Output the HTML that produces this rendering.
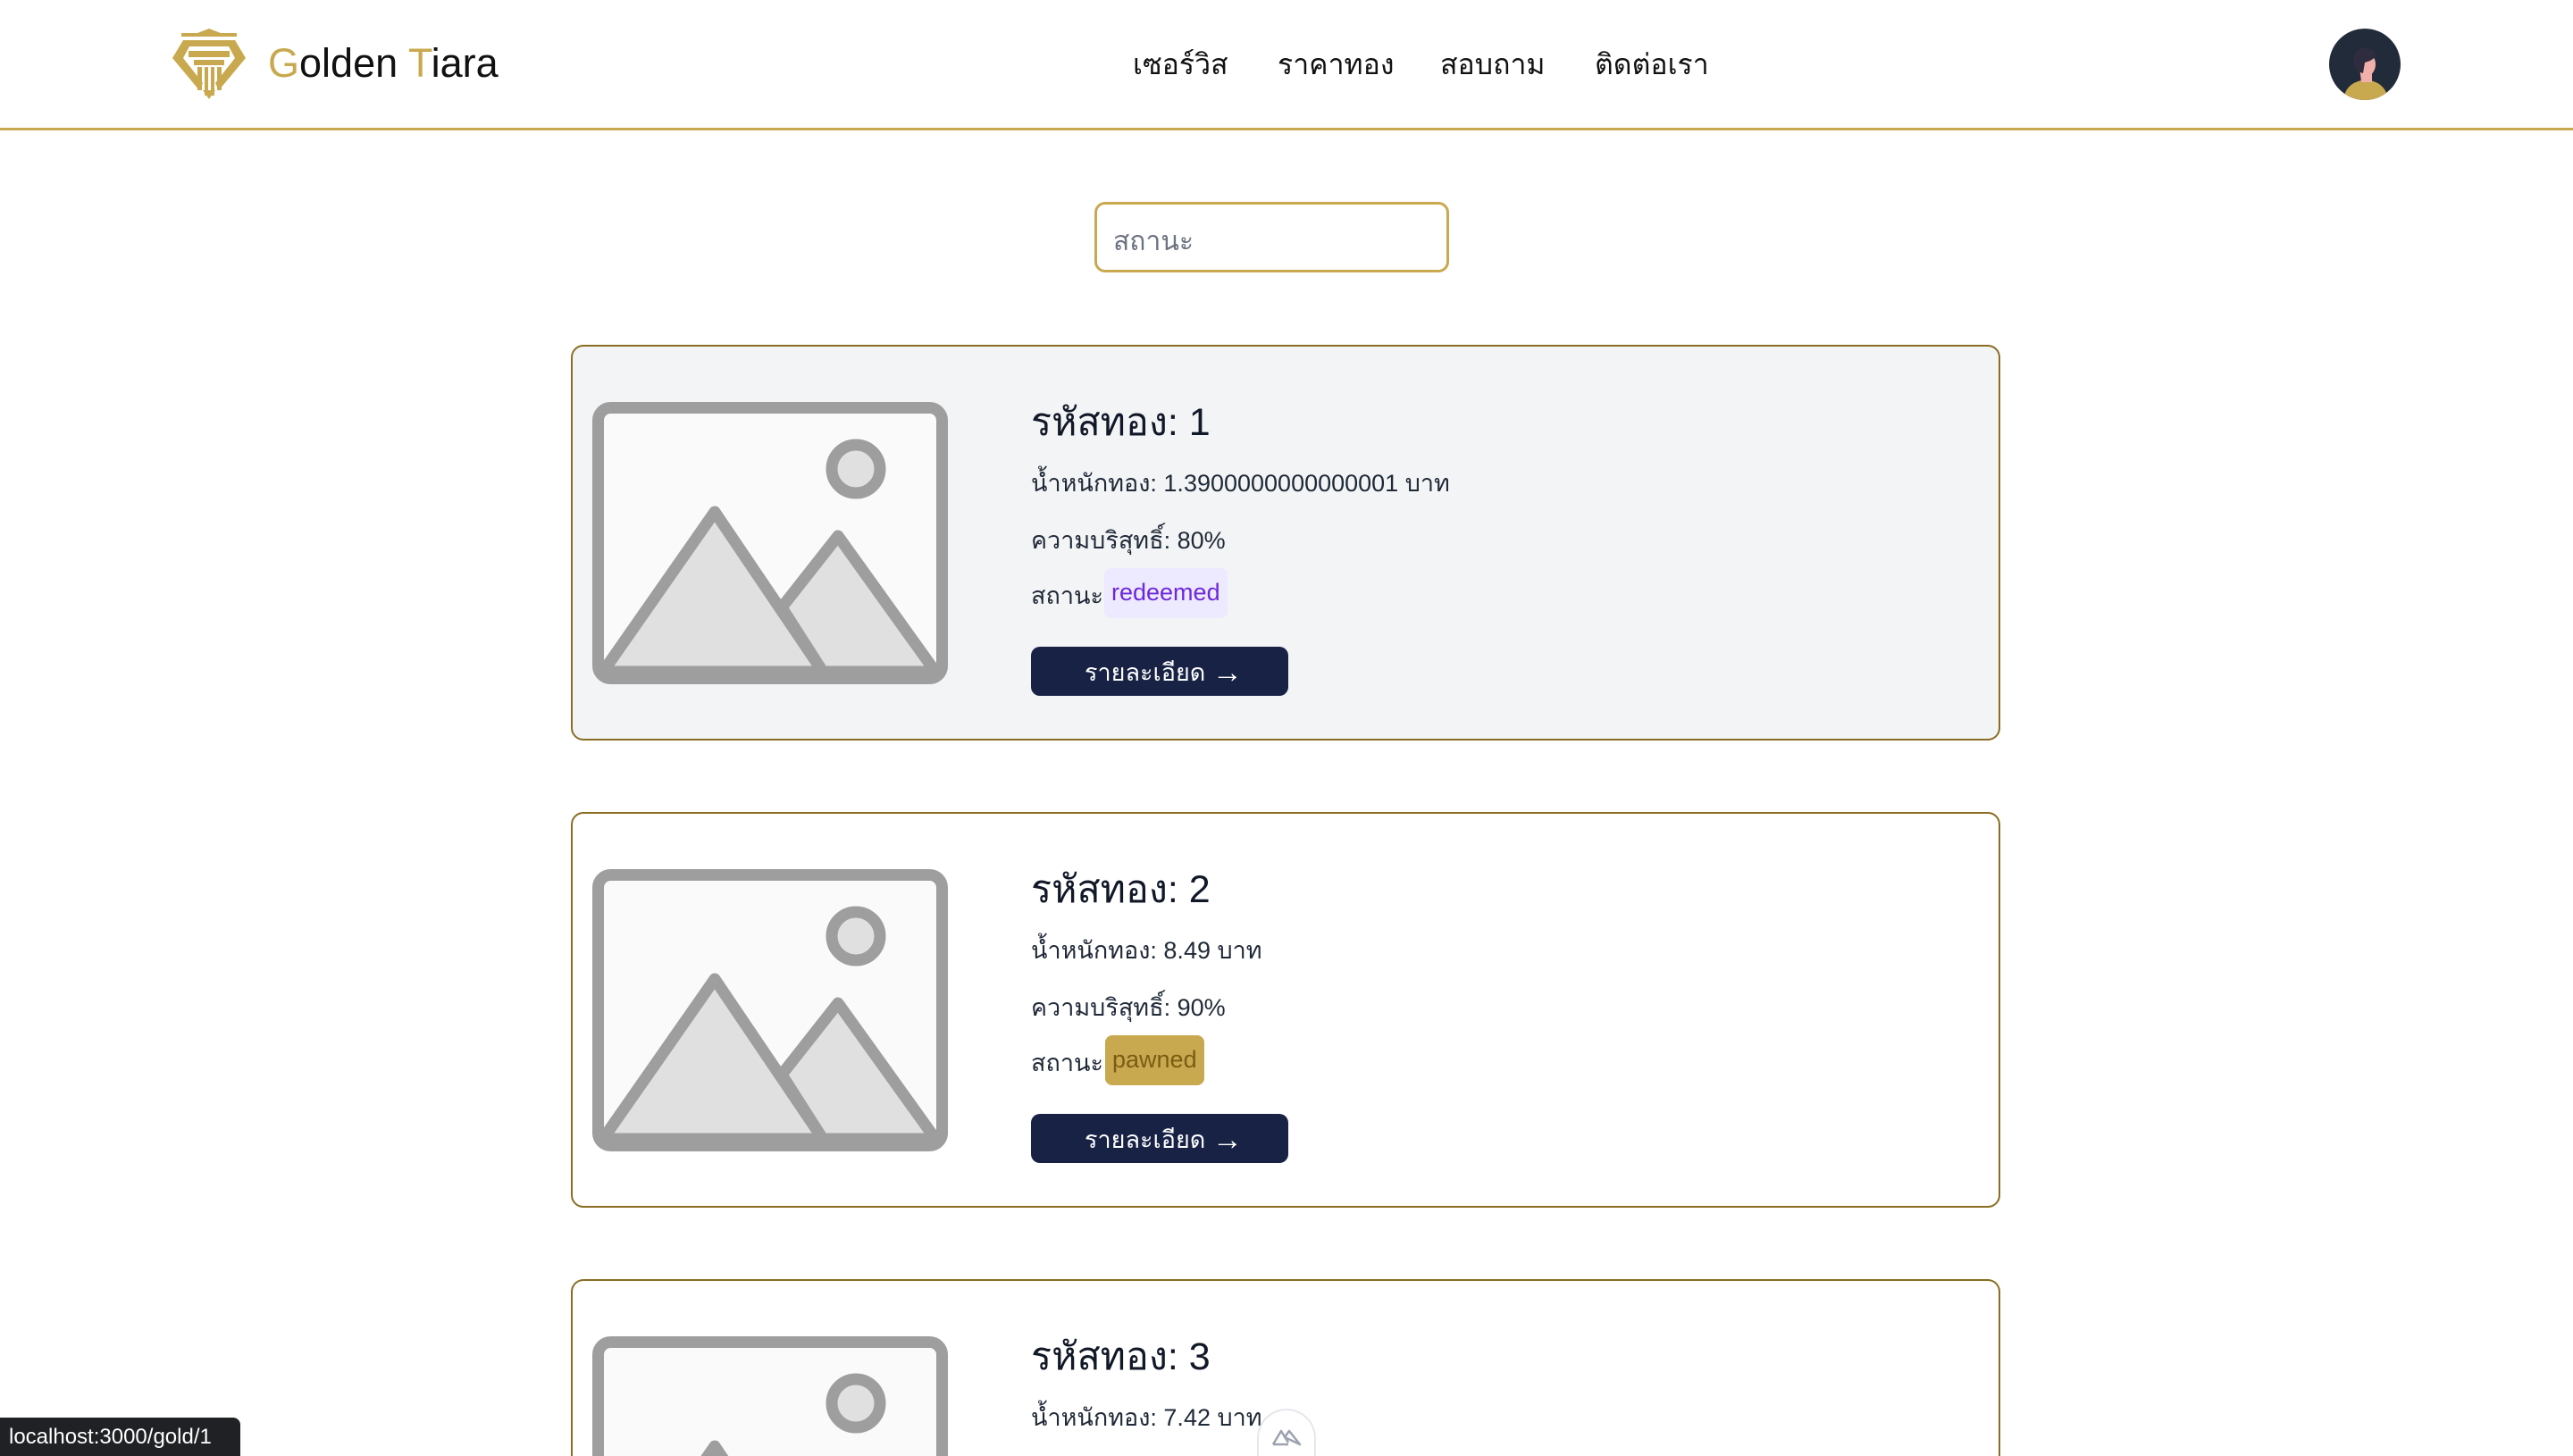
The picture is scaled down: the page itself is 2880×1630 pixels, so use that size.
<!DOCTYPE html>
<html><head><meta charset="utf-8">
<style>
*{margin:0;padding:0;box-sizing:border-box}
html,body{width:2880px;height:1630px;overflow:hidden}
body{background:#fff;font-family:"Liberation Sans","DejaVu Sans",sans-serif;color:#1f2937}
#w{position:relative;width:2880px;height:1630px;overflow:hidden}
.abs{position:absolute}
.hdr{left:0;top:0;width:2880px;height:146px;border-bottom:3px solid #c9a94f;background:#fff}
.logo{left:300px;top:45px;font-size:45px;color:#111;white-space:nowrap}
.logo b{font-weight:normal;color:#c9a94f}
.nav{top:47px;font-size:32px;color:#111;white-space:nowrap}
.inp{left:1225px;top:226px;width:397px;height:79px;border:3px solid #c9a94f;border-radius:12px;font-size:30px;color:#6b7280;padding:18px 0 0 18px}
.card{left:639px;width:1600px;height:443px;border:2px solid #8a6d23;border-radius:14px;background:#fff}
.t{font-size:43px;color:#111827;white-space:nowrap}
.l{font-size:27px;color:#1f2937;white-space:nowrap}
.badge{height:56px;border-radius:8px;font-size:27px;padding:12px 8px 0}
.btn{width:288px;height:55px;background:#172244;border-radius:10px;color:#fff;font-size:27px;padding:7px 0 0 60px;white-space:nowrap}
.btn span{font-size:34px;font-weight:bold;vertical-align:-2px}
</style></head><body><div id="w">
<div class="abs hdr"></div>
<svg class="abs" style="left:191px;top:31px" width="86" height="82" viewBox="0 0 86 82">
<path d="M12 10 L12 6 L30 6 L43 1 L56 6 L74 6 L74 10 Z" fill="#c9a94f"/>
<path d="M14 14 L72 14 L84 34 L54 70 L50 62 L72 34 L65 21 L21 21 L14 34 L36 62 L32 70 L2 34 Z" fill="#c9a94f"/>
<rect x="20" y="26" width="46" height="7" fill="#c9a94f"/>
<rect x="26" y="36" width="34" height="6" fill="#c9a94f"/>
<rect x="30" y="44" width="5" height="26" fill="#c9a94f"/>
<rect x="38" y="44" width="4" height="32" fill="#c9a94f"/>
<rect x="45" y="44" width="4" height="32" fill="#c9a94f"/>
<rect x="52" y="44" width="5" height="26" fill="#c9a94f"/>
<path d="M36 70 L43 80 L50 70 Z" fill="#c9a94f"/>
</svg>
<div class="abs logo"><b>G</b>olden <b>T</b>iara</div>
<div class="abs nav" style="left:1268px">เซอร์วิส</div>
<div class="abs nav" style="left:1430px">ราคาทอง</div>
<div class="abs nav" style="left:1612px">สอบถาม</div>
<div class="abs nav" style="left:1785px">ติดต่อเรา</div>
<svg class="abs" style="left:2607px;top:32px" width="80" height="80" viewBox="0 0 80 80">
<defs><clipPath id="c"><circle cx="40" cy="40" r="40"/></clipPath></defs>
<circle cx="40" cy="40" r="40" fill="#222b3a"/>
<g clip-path="url(#c)">
<path d="M16 80 Q18 62 36 58 L46 58 Q64 62 66 80 Z" fill="#c9a94f"/>
<path d="M34 42 L48 42 L48 60 L36 60 Z" fill="#f2b0aa"/>
<ellipse cx="42" cy="40" rx="10" ry="13" fill="#f2b0aa"/>
<path d="M27 40 Q26 22 40 22 Q52 22 52 32 L46 36 L40 38 L38 50 Q30 48 27 40 Z" fill="#302c3f"/>
</g></svg>
<div class="abs inp">สถานะ</div>

<div class="abs card" style="top:386px;background:#f3f4f6"></div>
<div class="abs card" style="top:909px"></div>
<div class="abs card" style="top:1432px;height:198px;border-bottom:none;border-radius:14px 14px 0 0"></div>

<svg class="abs" style="left:663px;top:450px" width="398" height="316"><rect x="6.5" y="6.5" width="385" height="303" rx="14" fill="#fafafa" stroke="#9e9e9e" stroke-width="13"/><polygon points="212,230 275,150 384,302 258,302" fill="#e0e0e0" stroke="#9e9e9e" stroke-width="13" stroke-linejoin="round"/><polygon points="12,302 137,123 258,302" fill="#e0e0e0" stroke="#9e9e9e" stroke-width="13" stroke-linejoin="round"/><circle cx="295" cy="75" r="27" fill="#e0e0e0" stroke="#9e9e9e" stroke-width="13"/></svg>
<svg class="abs" style="left:663px;top:973px" width="398" height="316"><rect x="6.5" y="6.5" width="385" height="303" rx="14" fill="#fafafa" stroke="#9e9e9e" stroke-width="13"/><polygon points="212,230 275,150 384,302 258,302" fill="#e0e0e0" stroke="#9e9e9e" stroke-width="13" stroke-linejoin="round"/><polygon points="12,302 137,123 258,302" fill="#e0e0e0" stroke="#9e9e9e" stroke-width="13" stroke-linejoin="round"/><circle cx="295" cy="75" r="27" fill="#e0e0e0" stroke="#9e9e9e" stroke-width="13"/></svg>
<svg class="abs" style="left:663px;top:1496px" width="398" height="134" viewBox="0 0 398 134"><rect x="6.5" y="6.5" width="385" height="303" rx="14" fill="#fafafa" stroke="#9e9e9e" stroke-width="13"/><polygon points="212,230 275,150 384,302 258,302" fill="#e0e0e0" stroke="#9e9e9e" stroke-width="13" stroke-linejoin="round"/><polygon points="12,302 137,123 258,302" fill="#e0e0e0" stroke="#9e9e9e" stroke-width="13" stroke-linejoin="round"/><circle cx="295" cy="75" r="27" fill="#e0e0e0" stroke="#9e9e9e" stroke-width="13"/></svg>

<div class="abs t" style="left:1154px;top:438px">รหัสทอง: 1</div>
<div class="abs l" style="left:1154px;top:519px">น้ำหนักทอง: 1.3900000000000001 บาท</div>
<div class="abs l" style="left:1154px;top:583px">ความบริสุทธิ์: 80%</div>
<div class="abs l" style="left:1154px;top:645px">สถานะ:</div>
<div class="abs badge" style="left:1236px;top:636px;background:#ede9fe;color:#6d28d9">redeemed</div>
<div class="abs btn" style="left:1154px;top:724px">รายละเอียด <span>→</span></div>

<div class="abs t" style="left:1154px;top:961px">รหัสทอง: 2</div>
<div class="abs l" style="left:1154px;top:1042px">น้ำหนักทอง: 8.49 บาท</div>
<div class="abs l" style="left:1154px;top:1106px">ความบริสุทธิ์: 90%</div>
<div class="abs l" style="left:1154px;top:1168px">สถานะ:</div>
<div class="abs badge" style="left:1237px;top:1159px;background:#c9a94f;color:#7a5c14">pawned</div>
<div class="abs btn" style="left:1154px;top:1247px">รายละเอียด <span>→</span></div>

<div class="abs t" style="left:1154px;top:1484px">รหัสทอง: 3</div>
<div class="abs l" style="left:1154px;top:1565px">น้ำหนักทอง: 7.42 บาท</div>

<div class="abs" style="left:1407px;top:1577px;width:66px;height:53px;border-radius:33px 33px 0 0;background:#fff;border:2px solid #e5e7eb;border-bottom:none"></div>
<svg class="abs" style="left:1422px;top:1597px" width="36" height="24" viewBox="0 0 36 24"><path d="M3 20 L12 5 L20 18 M16 12 L21 5 L33 20 Z M3 20 L20 20" fill="none" stroke="#9ca3af" stroke-width="2.5" stroke-linejoin="round"/></svg>
<div class="abs" style="left:0;top:1587px;width:269px;height:43px;background:#202124;border-radius:0 8px 0 0;color:#fff;font-size:24px;padding:8px 0 0 10px;white-space:nowrap">localhost:3000/gold/1</div>
</div></body></html>
